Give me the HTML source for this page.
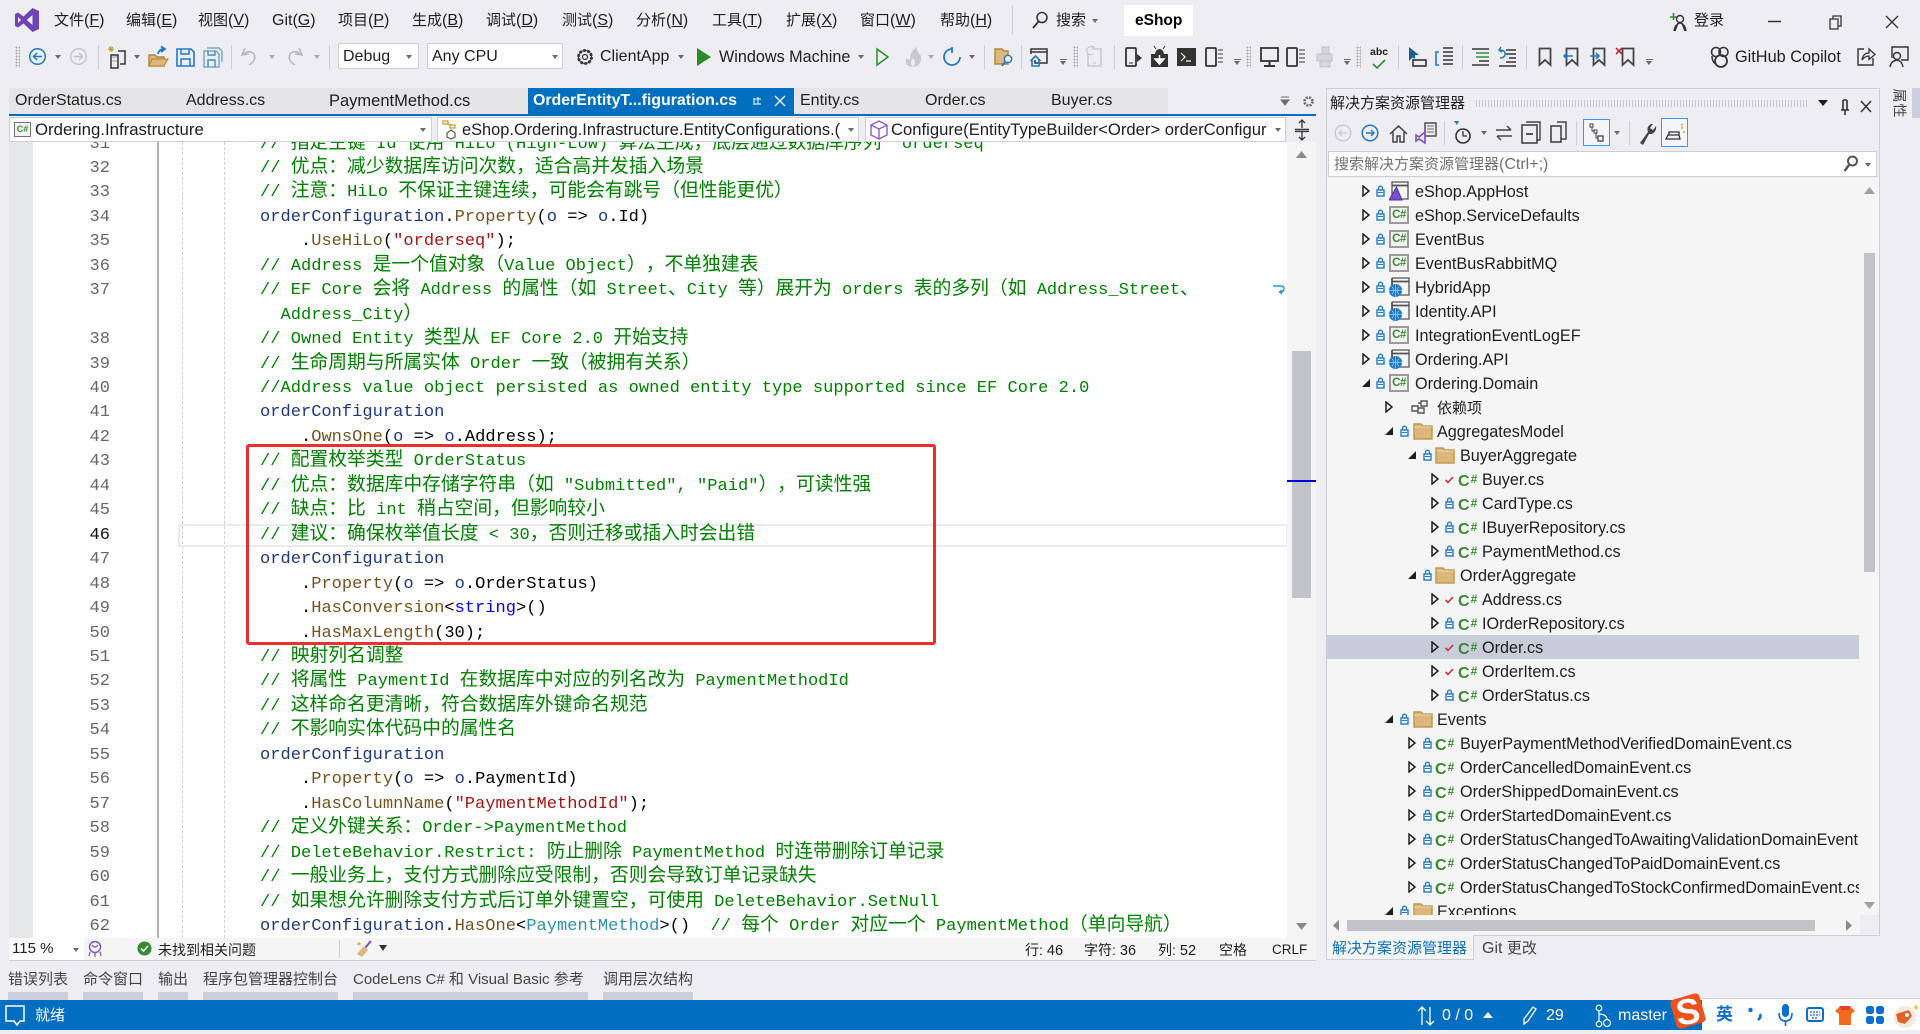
<!DOCTYPE html>
<html lang="zh"><head><meta charset="utf-8"><title>eShop</title>
<style>
html,body{margin:0;padding:0}
body{width:1920px;height:1030px;overflow:hidden;background:#eeeef2;position:relative;font:16px/20px "Liberation Sans","Noto Sans CJK SC",sans-serif;color:#1e1e1e}
.a{position:absolute}
.t{position:absolute;white-space:nowrap;line-height:20px}
em{font-style:normal;font-size:15px}
svg{overflow:visible}
svg.a{display:block}
.cr{position:absolute;width:0;height:0;border-left:3.5px solid transparent;border-right:3.5px solid transparent;border-top:4px solid #6a6a6a}
.sep{position:absolute;width:1px;background:#cccedb}
.gp{position:absolute;width:5px;height:22px;background-image:radial-gradient(circle,#a8a8ae 0.8px,transparent 1px);background-size:3px 3px}
.cb{position:absolute;background:#fff;border:1px solid #ccced8;box-sizing:border-box}
.code{position:absolute;left:0;top:142px;width:1287px;height:796px;overflow:hidden}
.ln{position:absolute;left:0;top:-9.5px;width:110px;text-align:right;color:#666}
.cd{position:absolute;left:260px;top:-9.5px;width:1030px;color:#000}
.ln p,.cd p{margin:0;height:24.46px;white-space:pre;font:17.07px/24.46px "Liberation Mono",monospace}
.cd b{font:400 18.8px/0 "Noto Sans CJK SC",sans-serif;text-spacing-trim:space-all}
.g{color:#008000}.n{color:#1f377f}.m{color:#74531f}.s{color:#a31515}.y{color:#2b91af}.k{color:#0000ff}
.tree{position:absolute;left:1326px;top:179px;width:533px;height:736px;overflow:hidden}
.r{position:absolute;left:0;width:533px;height:24px;line-height:24px;white-space:nowrap;font-size:16.2px}
.r svg,.r b,.r span{position:absolute}
.r span{top:1px}
.e{top:6px;width:9px;height:12px}
.lk{top:6px;width:9px;height:12px}
.ic{top:2px;width:24px;height:20px}
.l1 .e{left:36px}.l1 .lk{left:50px}.l1 .ic{left:63px}.l1 span{left:89px}
.l2 .e{left:59px}.l2 .lk{left:74px}.l2 .ic{left:87px}.l2 span{left:111px}
.l3 .e{left:82px}.l3 .lk{left:97px}.l3 .ic{left:109px}.l3 span{left:134px}
.l4 .e{left:105px}.l4 .lk{left:119px}.l4 .ic{left:132px}.l4 span{left:156px}
.r b.cs{top:0;font:700 16px/24px "Liberation Sans",sans-serif;color:#388a34;width:22px}
.r b.cs small{font-size:12px;vertical-align:3px;margin-left:1px}
.l3 b.cs{left:109px}.l4 b.cs{left:132px}
.r b.pj{left:63px;top:3px;width:20px;height:18px;box-sizing:border-box;border:2px solid #9a9a9a;background:#f4f4f4;color:#388a34;font:700 11.5px/14px "Liberation Sans",sans-serif;text-align:center;letter-spacing:-.5px}
.sel{background:#c9ccd9}
.wht{color:#fff}
.bar{position:absolute;width:7px;height:1px;background:#6a6a6a}
</style></head><body>
<svg width="0" height="0" style="position:absolute"><defs>
<symbol id="x" viewBox="0 0 9 12"><path d="M1 1L7 6L1 11Z" fill="none" stroke="#222" stroke-width="1.5"/></symbol>
<symbol id="v" viewBox="0 0 9 12"><path d="M8 2V10H0Z" fill="#1e1e1e"/></symbol>
<symbol id="l" viewBox="0 0 9 12"><path d="M2.5 5V3.2a2 2 0 0 1 4 0V5" fill="none" stroke="#1e78c8" stroke-width="1.3"/><rect x="1" y="5" width="7" height="6" fill="#fff" stroke="#1e78c8" stroke-width="1.4"/><path d="M2 7.5h5" stroke="#1e78c8"/></symbol>
<symbol id="ck" viewBox="0 0 9 12"><path d="M.5 7L3 9.5L8 4" fill="none" stroke="#d13438" stroke-width="1.6"/></symbol>
<symbol id="f" viewBox="0 0 24 20"><path d="M1 3H8L10 5H19V18H1Z" fill="#dcb67a" stroke="#c19a4e" stroke-width="1.5"/><path d="M1.5 6H18.5" stroke="#f0dcb4"/></symbol>
<symbol id="w" viewBox="0 0 24 20"><path d="M3 1H20V18H10" fill="#f4f4f4" stroke="#555" stroke-width="1.3"/><path d="M3 9V1M3 4.5H20" fill="none" stroke="#555" stroke-width="1.8"/><circle cx="6.5" cy="13.5" r="6.5" fill="#1e78c8"/><path d="M0 13.5h13M6.500 7v13M3 9.500q3.500 4 0 8M10 9.500q-3.500 4 0 8" stroke="#a9d0f0" stroke-width=".7" fill="none"/></symbol>
<symbol id="ah" viewBox="0 0 24 20"><path d="M3 1H19V18H3Z" fill="#f4f4f4" stroke="#555" stroke-width="1.3"/><path d="M3 4.500H19" stroke="#555" stroke-width="1.800"/><path d="M7.500 6L13 19H0Z" fill="#7a4fc9" stroke="#5a2fa9"/></symbol>
<symbol id="dp" viewBox="0 0 24 20"><path d="M2 9h6v5H2zM11 4h6v5h-6zM14 11h-6v5h6zM8 6h3" fill="#f4f4f4" stroke="#555" stroke-width="1.4"/></symbol>
<symbol id="bm" viewBox="0 0 14 20"><path d="M1.500 1.500H12.500V18L7 13L1.500 18Z" fill="none" stroke="#444" stroke-width="1.800"/></symbol>
</defs></svg>

<!-- title bar -->
<svg class="a" style="left:15px;top:8px" width="24" height="24" viewBox="0 0 24 24"><path fill-rule="evenodd" fill="#6f42b5" d="M17.500 0L24 3V21L17.500 24L8.500 15.500L3 19.500L0 18V6L3 4.500L8.500 8.500ZM17.500 7L11.700 12L17.500 17ZM3 9V15L6 12Z"/></svg>
<span class="t" style="left:54px;top:11px"><em>文件</em>(<u>F</u>)</span>
<span class="t" style="left:126px;top:11px"><em>编辑</em>(<u>E</u>)</span>
<span class="t" style="left:198px;top:11px"><em>视图</em>(<u>V</u>)</span>
<span class="t" style="left:272px;top:11px">Git(<u>G</u>)</span>
<span class="t" style="left:338px;top:11px"><em>项目</em>(<u>P</u>)</span>
<span class="t" style="left:412px;top:11px"><em>生成</em>(<u>B</u>)</span>
<span class="t" style="left:486px;top:11px"><em>调试</em>(<u>D</u>)</span>
<span class="t" style="left:562px;top:11px"><em>测试</em>(<u>S</u>)</span>
<span class="t" style="left:636px;top:11px"><em>分析</em>(<u>N</u>)</span>
<span class="t" style="left:712px;top:11px"><em>工具</em>(<u>T</u>)</span>
<span class="t" style="left:786px;top:11px"><em>扩展</em>(<u>X</u>)</span>
<span class="t" style="left:860px;top:11px"><em>窗口</em>(<u>W</u>)</span>
<span class="t" style="left:940px;top:11px"><em>帮助</em>(<u>H</u>)</span>
<div class="sep" style="left:1012px;top:6px;height:28px"></div>
<svg class="a" style="left:1031px;top:11px" width="18" height="20"><circle cx="11" cy="6.500" r="5" fill="none" stroke="#333" stroke-width="1.500"/><path d="M7.500 10.500L2 17" stroke="#333" stroke-width="1.800"/></svg>
<span class="t" style="left:1056px;top:11px"><em>搜索</em></span><i class="cr" style="left:1092px;top:19px"></i>
<div class="a" style="left:1124px;top:5px;width:69px;height:31px;background:#fff"></div>
<span class="t" style="left:1135px;top:11px;font-weight:700;font-size:15.500px;color:#000">eShop</span>
<svg class="a" style="left:1669px;top:10px" width="22" height="22"><path d="M1 7H8M4.500 3V10" stroke="#388a34" stroke-width="1.600"/><circle cx="11" cy="9" r="3.500" fill="none" stroke="#333" stroke-width="1.400"/><path d="M5 21Q6 14 11 13Q16 14 17 21M9 13L6 21M13 13L16 21" fill="none" stroke="#333" stroke-width="1.400"/></svg>
<span class="t" style="left:1694px;top:11px"><em>登录</em></span>
<svg class="a" style="left:1768px;top:14px" width="140" height="16"><path d="M0 7.500H13" stroke="#333" stroke-width="1.500"/><path d="M62 5H70V15H62ZM65 5V2H73V12H70" fill="none" stroke="#333" stroke-width="1.300"/><path d="M118 2L130 14M130 2L118 14" stroke="#333" stroke-width="1.300"/></svg>

<!-- toolbar -->
<div class="gp" style="left:15px;top:46px"></div>
<svg class="a" style="left:29px;top:47px" width="20" height="20"><circle cx="8.500" cy="9.500" r="7.800" fill="none" stroke="#1e78c8" stroke-width="1.500"/><path d="M13 9.500H5M8 6L4.500 9.500L8 13" fill="none" stroke="#1e78c8" stroke-width="1.500"/></svg>
<i class="cr" style="left:55px;top:55px"></i>
<svg class="a" style="left:70px;top:47px" width="20" height="20"><circle cx="8.500" cy="9.500" r="7.800" fill="none" stroke="#c2c2c6" stroke-width="1.300"/><path d="M4 9.500H12M9 6L12.500 9.500L9 13" fill="none" stroke="#c2c2c6" stroke-width="1.400"/></svg>
<div class="sep" style="left:98px;top:45px;height:24px"></div>
<svg class="a" style="left:107px;top:45px" width="22" height="24"><path d="M4 1V7M1 4H7M2 2L6 6M6 2L2 6" stroke="#c89a2a" stroke-width="1"/><path d="M4 10H11V23H4ZM11 6H18V19H13" fill="#eeeef2" stroke="#333" stroke-width="1.500"/><path d="M5 12H10M5 16H10" stroke="#999"/></svg>
<i class="cr" style="left:134px;top:55px"></i>
<svg class="a" style="left:148px;top:46px" width="22" height="22"><path d="M1 9H7L9 11H16V20H1Z" fill="#dcb67a" stroke="#b0853a" stroke-width="1.400"/><path d="M1 20L4 13H20L16 20Z" fill="#dcb67a" stroke="#b0853a"/><path d="M10 8Q11 3 16 3M13 .5L17 3L13 6" fill="none" stroke="#1e78c8" stroke-width="1.800"/></svg>
<svg class="a" style="left:176px;top:48px" width="20" height="20"><path d="M1 1H15L18 4V18H1Z" fill="#eeeef2" stroke="#1e78c8" stroke-width="1.600"/><path d="M5 1V6H13V1M5 18V11H14V18" fill="none" stroke="#1e78c8" stroke-width="1.500"/></svg>
<svg class="a" style="left:203px;top:47px" width="20" height="21"><path d="M4 1H16L19 4V15M1 4H13L16 7V20H1Z" fill="#eeeef2" stroke="#7aa7d0" stroke-width="1.500"/><path d="M5 4V8H12V4M5 20V13H12V20" fill="none" stroke="#4a89c4" stroke-width="1.400"/></svg>
<div class="sep" style="left:231px;top:45px;height:24px"></div>
<svg class="a" style="left:240px;top:47px" width="18" height="20"><path d="M5 1L2 8L9 7M2.500 8Q9 2 14 7Q17 13 9 18" fill="none" stroke="#b9b9bf" stroke-width="1.600"/></svg>
<i class="cr" style="left:269px;top:55px;border-top-color:#aaa"></i>
<svg class="a" style="left:286px;top:47px" width="18" height="20"><path d="M13 1L16 8L9 7M15.500 8Q9 2 4 7Q1 13 9 18" fill="none" stroke="#b9b9bf" stroke-width="1.600"/></svg>
<i class="cr" style="left:314px;top:55px;border-top-color:#aaa"></i>
<div class="sep" style="left:329px;top:45px;height:24px"></div>
<div class="cb" style="left:338px;top:43px;width:81px;height:26px"></div>
<span class="t" style="left:343px;top:47px">Debug</span><i class="cr" style="left:406px;top:55px"></i>
<div class="cb" style="left:427px;top:43px;width:136px;height:26px"></div>
<span class="t" style="left:432px;top:47px">Any CPU</span><i class="cr" style="left:552px;top:55px"></i>
<svg class="a" style="left:574px;top:46px" width="22" height="22"><circle cx="11" cy="11" r="6.500" fill="none" stroke="#333" stroke-width="2.800" stroke-dasharray="2.500 1.600"/><circle cx="11" cy="11" r="6.500" fill="none" stroke="#333" stroke-width="1"/><circle cx="11" cy="11" r="2.500" fill="none" stroke="#333" stroke-width="1.200"/></svg>
<span class="t" style="left:600px;top:47px">ClientApp</span><i class="cr" style="left:678px;top:55px"></i>
<svg class="a" style="left:697px;top:48px" width="14" height="18"><path d="M0 0L14 9L0 18Z" fill="#2b8a2b"/></svg>
<span class="t" style="left:719px;top:47px;font-size:16.200px">Windows Machine</span><i class="cr" style="left:858px;top:55px"></i>
<svg class="a" style="left:876px;top:48px" width="13" height="18"><path d="M1 1L12 9L1 17Z" fill="none" stroke="#2b8a2b" stroke-width="1.500"/></svg>
<svg class="a" style="left:903px;top:46px" width="20" height="22"><path d="M13 1Q15 7 18 10Q19 20 10 21Q1 20 3 12Q5 14 7 13Q7 6 13 1Z" fill="#c9c9cd"/><path d="M10 21Q6 17 10 12Q14 17 10 21Z" fill="#eeeef2"/></svg>
<i class="cr" style="left:928px;top:55px;border-top-color:#aaa"></i>
<svg class="a" style="left:943px;top:47px" width="20" height="20"><path d="M9 2A8 8 0 1 0 17 10M9 0V6" fill="none" stroke="#1e78c8" stroke-width="1.700"/></svg>
<i class="cr" style="left:969px;top:55px"></i>
<div class="sep" style="left:984px;top:45px;height:24px"></div>
<svg class="a" style="left:994px;top:47px" width="20" height="21"><path d="M1 2H8L10 4H14V17H1Z" fill="#dcb67a" stroke="#b0853a" stroke-width="1.400"/><circle cx="14" cy="12" r="3.700" fill="#eee" stroke="#1e78c8" stroke-width="1.400"/><path d="M11 15L8 19" stroke="#1e78c8" stroke-width="1.800"/></svg>
<div class="sep" style="left:1021px;top:45px;height:24px"></div>
<svg class="a" style="left:1030px;top:48px" width="20" height="20"><path d="M5 12V15H17V1H1V6M1 4H17" fill="none" stroke="#333" stroke-width="1.500"/><path d="M.5 13L5.500 8L10.500 13M2 12V18H9V12" fill="none" stroke="#1e78c8" stroke-width="1.600"/></svg>
<div class="bar" style="left:1060px;top:59px"></div><i class="cr" style="left:1060px;top:61px"></i>
<div class="gp" style="left:1073px;top:46px"></div>
<svg class="a" style="left:1085px;top:46px" width="18" height="22"><path d="M3 7V20H16V3H9" fill="none" stroke="#c9c9cd" stroke-width="1.500"/><path d="M7 1A4 4 0 1 0 8 8M6 0L9 1L7 4M8 17H11" fill="none" stroke="#c9c9cd" stroke-width="1.200"/></svg>
<div class="sep" style="left:1114px;top:45px;height:24px"></div>
<svg class="a" style="left:1125px;top:47px" width="18" height="21"><rect x="1" y="1" width="10" height="18" rx="1" fill="none" stroke="#333" stroke-width="1.800"/><path d="M12 7L17 11L12 15Z" fill="#333"/><path d="M4 16H8" stroke="#333"/></svg>
<svg class="a" style="left:1150px;top:46px" width="19" height="22"><path d="M1 21V8H5Q6 3 9.500 3Q13 3 14 8H18V21Z" fill="#333"/><path d="M6 3L4 0M13 3L15 0" stroke="#333"/><path d="M9.500 9V14M5 13H14L9.500 18Z" fill="#fff" stroke="#fff" stroke-width="1.500"/></svg>
<svg class="a" style="left:1177px;top:48px" width="19" height="18"><rect width="19" height="18" fill="#333"/><path d="M4 5L8 9L4 13M9 13H14" fill="none" stroke="#fff" stroke-width="1.200"/></svg>
<svg class="a" style="left:1205px;top:47px" width="19" height="21"><rect x="1" y="1" width="10" height="18" rx="1" fill="none" stroke="#333" stroke-width="1.800"/><path d="M13 3H18M13 7H18M13 11H18M13 15H18" stroke="#777" stroke-width="1.400"/></svg>
<div class="bar" style="left:1234px;top:59px"></div><i class="cr" style="left:1234px;top:61px"></i>
<div class="gp" style="left:1246px;top:46px"></div>
<svg class="a" style="left:1260px;top:47px" width="19" height="21"><rect x="1" y="1" width="17" height="13" fill="none" stroke="#333" stroke-width="1.800"/><path d="M9.500 14V18M4 19H15" stroke="#333" stroke-width="2"/></svg>
<svg class="a" style="left:1286px;top:47px" width="20" height="21"><rect x="1" y="1" width="10" height="18" rx="1" fill="none" stroke="#333" stroke-width="1.800"/><path d="M13 3H19M13 7H19M13 11H19M13 15H19" stroke="#777" stroke-width="1.400"/></svg>
<svg class="a" style="left:1315px;top:46px" width="20" height="22"><path d="M7 1H14V8H7ZM2 8H17V15H2ZM5 15H15V21H5Z" fill="#d6d6da" stroke="#c2c2c6"/></svg>
<div class="bar" style="left:1344px;top:59px"></div><i class="cr" style="left:1344px;top:61px"></i>
<div class="gp" style="left:1356px;top:46px"></div>
<span class="t" style="left:1370px;top:46px;font:700 10.500px/12px 'Liberation Sans',sans-serif">abc</span>
<svg class="a" style="left:1372px;top:59px" width="16" height="10"><path d="M1 5L5 9L13 1" fill="none" stroke="#388a34" stroke-width="1.600"/></svg>
<div class="sep" style="left:1398px;top:45px;height:24px"></div>
<svg class="a" style="left:1407px;top:46px" width="20" height="22"><path d="M2 1V15L5.500 11.500L8 13V9H12Z" fill="#1c5c9c"/><rect x="6" y="14" width="13" height="6" fill="none" stroke="#333" stroke-width="1.600"/></svg>
<svg class="a" style="left:1435px;top:47px" width="20" height="20"><path d="M4 5H1V18H4" fill="none" stroke="#1e78c8" stroke-width="1.600"/><path d="M8 1H18M8 5H18M8 9H18M8 13H18M8 17H18" stroke="#333" stroke-width="1.400"/></svg>
<div class="sep" style="left:1462px;top:45px;height:24px"></div>
<svg class="a" style="left:1471px;top:48px" width="20" height="18"><path d="M1 1H18M8 13H18M1 17H18" stroke="#333" stroke-width="1.500"/><path d="M5 5H18M5 9H18" stroke="#388a34" stroke-width="1.500"/></svg>
<svg class="a" style="left:1498px;top:47px" width="20" height="20"><path d="M8 3H18M8 7H18M11 11H18M8 15H18M1 19H18" stroke="#333" stroke-width="1.500"/><path d="M3 0L1 3L4 5M1 3Q8 3 7 8Q6 11 2 11" fill="none" stroke="#1e78c8" stroke-width="1.500"/></svg>
<div class="sep" style="left:1526px;top:45px;height:24px"></div>
<svg class="a" style="left:1538px;top:47px" width="14" height="20"><use href="#bm"/></svg>
<svg class="a" style="left:1565px;top:47px" width="14" height="20"><use href="#bm"/></svg><svg class="a" style="left:1562px;top:52px" width="12" height="8"><path d="M11 4H2M5 1L2 4L5 7" fill="none" stroke="#1e78c8" stroke-width="1.600"/></svg>
<svg class="a" style="left:1592px;top:47px" width="14" height="20"><use href="#bm"/></svg><svg class="a" style="left:1590px;top:52px" width="12" height="8"><path d="M0 4H9M6 1L9 4L6 7" fill="none" stroke="#1e78c8" stroke-width="1.600"/></svg>
<svg class="a" style="left:1621px;top:47px" width="14" height="20"><use href="#bm"/></svg><svg class="a" style="left:1615px;top:47px" width="9" height="9"><path d="M1 1L7 7M7 1L1 7" stroke="#c8102e" stroke-width="1.500"/></svg>
<div class="bar" style="left:1646px;top:59px"></div><i class="cr" style="left:1646px;top:61px"></i>
<svg class="a" style="left:1710px;top:46px" width="20" height="22"><circle cx="6" cy="6" r="4.500" fill="none" stroke="#333" stroke-width="1.600"/><circle cx="13.500" cy="6" r="4.500" fill="none" stroke="#333" stroke-width="1.600"/><circle cx="11" cy="15" r="6" fill="none" stroke="#333" stroke-width="1.800"/><path d="M2 10Q2 16 6 18" fill="none" stroke="#333" stroke-width="1.500"/></svg>
<span class="t" style="left:1735px;top:47px;font-size:16.300px">GitHub Copilot</span>
<svg class="a" style="left:1857px;top:47px" width="19" height="20"><path d="M7 2H1V18H16V11" fill="none" stroke="#333" stroke-width="1.400"/><path d="M5 13Q6 6 12 6V2L18 7.500L12 12.500V9Q8 9 5 13Z" fill="#eee" stroke="#333" stroke-width="1.300"/></svg>
<svg class="a" style="left:1888px;top:46px" width="21" height="22"><path d="M4 12V1H20V14H13" fill="none" stroke="#333" stroke-width="1.400"/><circle cx="9" cy="10" r="3.500" fill="#eee" stroke="#333" stroke-width="1.400"/><path d="M2 21Q3 15 9 14Q14 15 15 21" fill="none" stroke="#333" stroke-width="1.400"/></svg>

<!-- document tabs -->
<div class="a" style="left:9px;top:88px;width:1159px;height:26px;background:#e5e5e8"></div>
<div class="a" style="left:528px;top:88px;width:266px;height:26px;background:#006fc0"></div>
<div class="a" style="left:9px;top:114px;width:1307px;height:2px;background:#006fc0"></div>
<span class="t" style="left:15px;top:91px">OrderStatus.cs</span>
<span class="t" style="left:186px;top:91px">Address.cs</span>
<span class="t" style="left:329px;top:91px;font-size:16.500px">PaymentMethod.cs</span>
<span class="t wht" style="left:533px;top:91px;font-weight:700;font-size:15.900px">OrderEntityT...figuration.cs</span>
<svg class="a" style="left:751px;top:96px" width="11" height="11"><path d="M3 1V8M8 1V8M2 8H9M3 4H8M1 4H3" stroke="#fff" stroke-width="1" fill="none" transform="rotate(90 5.500 5.500)"/></svg>
<svg class="a" style="left:774px;top:95px" width="12" height="12"><path d="M1 1L11 11M11 1L1 11" stroke="#fff" stroke-width="1.300"/></svg>
<span class="t" style="left:800px;top:91px">Entity.cs</span>
<span class="t" style="left:925px;top:91px">Order.cs</span>
<span class="t" style="left:1051px;top:91px">Buyer.cs</span>
<svg class="a" style="left:1280px;top:96px" width="10" height="12"><path d="M1 1H9M1 4L5 9L9 4Z" fill="#6a6a6a" stroke="#6a6a6a"/></svg>
<svg class="a" style="left:1302px;top:95px" width="13" height="13"><circle cx="6.500" cy="6.500" r="4" fill="none" stroke="#6a6a6a" stroke-width="2.600" stroke-dasharray="2 1.200"/></svg>

<!-- nav bar -->
<div class="cb" style="left:9px;top:117px;width:423px;height:25px"></div>
<div class="cb" style="left:437px;top:117px;width:422px;height:25px"></div>
<div class="cb" style="left:865px;top:117px;width:421px;height:25px"></div>
<div class="a" style="left:14px;top:122px;width:17px;height:15px;border:1.500px solid #777;box-sizing:border-box;background:#f4f4f4;color:#388a34;font:700 9px/12px 'Liberation Sans',sans-serif;text-align:center">C#</div>
<span class="t" style="left:35px;top:120px;font-size:16.800px">Ordering.Infrastructure</span><i class="cr" style="left:420px;top:128px"></i>
<svg class="a" style="left:441px;top:120px" width="20" height="20"><path d="M2 1H7V4H2ZM9 5H14V8H9Z" fill="none" stroke="#c89a2a" stroke-width="1.200"/><path d="M5 4L11 5" stroke="#c89a2a"/><path d="M10 10L14 13V17L10 19L6 17V13Z" fill="#fff" stroke="#555" stroke-width="1.200"/></svg>
<span class="t" style="left:462px;top:120px;width:387px;overflow:hidden;font-size:16.400px">eShop.Ordering.Infrastructure.EntityConfigurations.(</span><i class="cr" style="left:848px;top:128px"></i>
<svg class="a" style="left:870px;top:120px" width="18" height="20"><path d="M9 1L17 5V15L9 19L1 15V5ZM1 5L9 9L17 5M9 9V19" fill="none" stroke="#8a5cc8" stroke-width="1.400"/></svg>
<span class="t" style="left:891px;top:120px;width:384px;overflow:hidden;font-size:16.650px">Configure(EntityTypeBuilder&lt;Order&gt; orderConfigur</span><i class="cr" style="left:1275px;top:128px"></i>
<svg class="a" style="left:1294px;top:120px" width="16" height="20"><path d="M1 9.500H15" stroke="#333" stroke-width="1.500"/><path d="M1 11.500H15M8 0V8M8 12V20M5 3L8 0L11 3M5 17L8 20L11 17" fill="none" stroke="#333" stroke-width="1.300"/></svg>

<!-- editor -->
<div class="a" style="left:9px;top:142px;width:1278px;height:796px;background:#fff"></div>
<div class="a" style="left:9px;top:142px;width:24px;height:796px;background:#e6e7e8"></div>
<div class="a" style="left:157px;top:142px;width:2px;height:796px;background:#b0b0b0"></div>
<div class="a" style="left:182px;top:142px;height:796px;border-left:1px dashed #cfcfcf"></div>
<div class="a" style="left:224px;top:142px;height:796px;border-left:1px dashed #cfcfcf"></div>
<div class="a" style="left:178px;top:524px;width:1106px;height:19px;border:2px solid #eaeaf2"></div>
<div class="code">
<div class="ln"><p>31</p><p>32</p><p>33</p><p>34</p><p>35</p><p>36</p><p>37</p><p> </p><p>38</p><p>39</p><p>40</p><p>41</p><p>42</p><p>43</p><p>44</p><p>45</p><p style="color:#111">46</p><p>47</p><p>48</p><p>49</p><p>50</p><p>51</p><p>52</p><p>53</p><p>54</p><p>55</p><p>56</p><p>57</p><p>58</p><p>59</p><p>60</p><p>61</p><p>62</p></div>
<div class="cd">
<p class="g">// <b>指定主键</b> Id <b>使用</b> HiLo (High-Low) <b>算法生成，底层通过数据库序列</b>  orderseq</p>
<p class="g">// <b>优点：减少数据库访问次数，适合高并发插入场景</b></p>
<p class="g">// <b>注意：</b>HiLo <b>不保证主键连续，可能会有跳号（但性能更优）</b></p>
<p><span class="n">orderConfiguration</span>.<span class="m">Property</span>(<span class="n">o</span> =&gt; <span class="n">o</span>.Id)</p>
<p>    .<span class="m">UseHiLo</span>(<span class="s">"orderseq"</span>);</p>
<p class="g">// Address <b>是一个值对象（</b>Value Object<b>），不单独建表</b></p>
<p class="g">// EF Core <b>会将</b> Address <b>的属性（如</b> Street<b>、</b>City <b>等）展开为</b> orders <b>表的多列（如</b> Address_Street<b>、</b></p>
<p class="g">  Address_City<b>）</b></p>
<p class="g">// Owned Entity <b>类型从</b> EF Core 2.0 <b>开始支持</b></p>
<p class="g">// <b>生命周期与所属实体</b> Order <b>一致（被拥有关系）</b></p>
<p class="g">//Address value object persisted as owned entity type supported since EF Core 2.0</p>
<p class="n">orderConfiguration</p>
<p>    .<span class="m">OwnsOne</span>(<span class="n">o</span> =&gt; <span class="n">o</span>.Address);</p>
<p class="g">// <b>配置枚举类型</b> OrderStatus</p>
<p class="g">// <b>优点：数据库中存储字符串（如</b> "Submitted", "Paid"<b>），可读性强</b></p>
<p class="g">// <b>缺点：比</b> int <b>稍占空间，但影响较小</b></p>
<p class="g">// <b>建议：确保枚举值长度</b> &lt; 30<b>，否则迁移或插入时会出错</b></p>
<p class="n">orderConfiguration</p>
<p>    .<span class="m">Property</span>(<span class="n">o</span> =&gt; <span class="n">o</span>.OrderStatus)</p>
<p>    .<span class="m">HasConversion</span>&lt;<span class="k">string</span>&gt;()</p>
<p>    .<span class="m">HasMaxLength</span>(30);</p>
<p class="g">// <b>映射列名调整</b></p>
<p class="g">// <b>将属性</b> PaymentId <b>在数据库中对应的列名改为</b> PaymentMethodId</p>
<p class="g">// <b>这样命名更清晰，符合数据库外键命名规范</b></p>
<p class="g">// <b>不影响实体代码中的属性名</b></p>
<p class="n">orderConfiguration</p>
<p>    .<span class="m">Property</span>(<span class="n">o</span> =&gt; <span class="n">o</span>.PaymentId)</p>
<p>    .<span class="m">HasColumnName</span>(<span class="s">"PaymentMethodId"</span>);</p>
<p class="g">// <b>定义外键关系：</b>Order-&gt;PaymentMethod</p>
<p class="g">// DeleteBehavior.Restrict: <b>防止删除</b> PaymentMethod <b>时连带删除订单记录</b></p>
<p class="g">// <b>一般业务上，支付方式删除应受限制，否则会导致订单记录缺失</b></p>
<p class="g">// <b>如果想允许删除支付方式后订单外键置空，可使用</b> DeleteBehavior.SetNull</p>
<p><span class="n">orderConfiguration</span>.<span class="m">HasOne</span>&lt;<span class="y">PaymentMethod</span>&gt;()  <span class="g">// <b>每个</b> Order <b>对应一个</b> PaymentMethod<b>（单向导航）</b></span></p>
</div></div>
<svg class="a" style="left:1272px;top:284px" width="13" height="10"><path d="M1 2H9Q12 2 12 5Q12 8 8 8M10 6L7.500 8L10 10" fill="none" stroke="#1e9ad6" stroke-width="1.400"/></svg>
<div class="a" style="left:246px;top:444px;width:690px;height:201px;border:3px solid #e9302e;border-radius:3px;box-sizing:border-box"></div>
<!-- editor scrollbar -->
<div class="a" style="left:1287px;top:142px;width:29px;height:796px;background:#f5f5f5"></div>
<div class="a" style="left:1292px;top:351px;width:19px;height:247px;background:#c2c3c9"></div>
<svg class="a" style="left:1296px;top:151px" width="11" height="7"><path d="M5.500 0L11 7H0Z" fill="#8a8a8f"/></svg>
<svg class="a" style="left:1296px;top:923px" width="11" height="7"><path d="M0 0H11L5.500 7Z" fill="#8a8a8f"/></svg>
<div class="a" style="left:1287px;top:480px;width:29px;height:2px;background:#0000e0"></div>

<!-- editor status -->
<div class="a" style="left:9px;top:938px;width:1307px;height:22px;background:#f5f5f5;border-bottom:1px solid #ccced8;box-sizing:content-box"></div>
<div class="a" style="left:9px;top:938px;width:75px;height:22px;background:#fff"></div>
<span class="t" style="left:12px;top:939px;font-size:15px">115 %</span><i class="cr" style="left:73px;top:948px"></i>
<svg class="a" style="left:88px;top:940px" width="15" height="18"><circle cx="7" cy="7" r="5.500" fill="none" stroke="#7a4fc9" stroke-width="1.400"/><path d="M4 5Q7 9 10 5M7 12V17M2 12L1 16M12 12L13 16" fill="none" stroke="#7a4fc9" stroke-width="1.200"/></svg>
<svg class="a" style="left:137px;top:941px" width="15" height="15"><circle cx="7.500" cy="7.500" r="7" fill="#388a34"/><path d="M4 7.500L6.500 10L11 5" fill="none" stroke="#fff" stroke-width="1.500"/></svg>
<span class="t" style="left:158px;top:940px"><em style="font-size:14px">未找到相关问题</em></span>
<div class="sep" style="left:339px;top:940px;height:18px"></div>
<svg class="a" style="left:356px;top:940px" width="17" height="18"><path d="M15 1L9 8" stroke="#7a4fc9" stroke-width="2"/><path d="M8 6L12 10L6 17L1 14Z" fill="#dcb67a"/><path d="M3 2V5M1 4H5" stroke="#d4a017"/></svg>
<svg class="a" style="left:379px;top:945px" width="8" height="6"><path d="M0 0H8L4 6Z" fill="#333"/></svg>
<span class="t" style="left:1025px;top:940px;font-size:14.500px"><em style="font-size:14px">行:</em> 46</span>
<span class="t" style="left:1084px;top:940px;font-size:14.500px"><em style="font-size:14px">字符:</em> 36</span>
<span class="t" style="left:1158px;top:940px;font-size:14.500px"><em style="font-size:14px">列:</em> 52</span>
<span class="t" style="left:1219px;top:940px"><em style="font-size:14px">空格</em></span>
<span class="t" style="left:1272px;top:940px;font-size:13.500px">CRLF</span>

<!-- solution explorer -->
<div class="a" style="left:1326px;top:88px;width:554px;height:848px;box-sizing:border-box;border:1px solid #ccced8;background:#f5f5f5"></div>
<div class="a" style="left:1327px;top:89px;width:552px;height:89px;background:#eeeef2"></div>
<span class="t" style="left:1330px;top:94px"><em>解决方案资源管理器</em></span>
<div class="a" style="left:1476px;top:100px;width:332px;height:7px;background:repeating-linear-gradient(90deg,#c8c8d0 0 1px,transparent 1px 3px)"></div>
<svg class="a" style="left:1818px;top:100px" width="60" height="16"><path d="M0 0H10L5 6Z" fill="#1e1e1e"/><path d="M25 0V10M29 0V10M23 10H31M27 10V15M25 0H29" stroke="#333" stroke-width="1.600" fill="none"/><path d="M43 1L53 12M53 1L43 12" stroke="#333" stroke-width="1.500"/></svg>
<svg class="a" style="left:1334px;top:124px" width="18" height="18"><circle cx="9" cy="9" r="7.800" fill="none" stroke="#c9c9cd" stroke-width="1.400"/><path d="M13 9H5M8 6L5 9L8 12" fill="none" stroke="#c9c9cd" stroke-width="1.300"/></svg>
<svg class="a" style="left:1361px;top:124px" width="18" height="18"><circle cx="9" cy="9" r="7.800" fill="none" stroke="#1e78c8" stroke-width="1.500"/><path d="M5 9H13M10 6L13 9L10 12" fill="none" stroke="#1e78c8" stroke-width="1.400"/></svg>
<svg class="a" style="left:1389px;top:124px" width="19" height="19"><path d="M1 10L9.500 2L18 10M4 8V18H8V12H11V18H15V8" fill="none" stroke="#444" stroke-width="1.500"/></svg>
<svg class="a" style="left:1415px;top:122px" width="22" height="22"><rect x="10" y="1" width="11" height="13" fill="none" stroke="#444" stroke-width="1.400"/><path d="M12 4H19M12 7H19M12 10H19" stroke="#666"/><path d="M1 13L4 15L10 10V21L4 17L1 19Z" fill="none" stroke="#7a4fc9" stroke-width="1.600"/></svg>
<div class="sep" style="left:1444px;top:121px;height:24px"></div>
<svg class="a" style="left:1451px;top:120px" width="24" height="26"><path d="M3 1H8L6 5Z" fill="#1e78c8"/><circle cx="12" cy="16" r="7" fill="none" stroke="#333" stroke-width="1.600"/><path d="M12 11V16H16" fill="none" stroke="#333" stroke-width="1.300"/></svg>
<i class="cr" style="left:1481px;top:131px"></i>
<svg class="a" style="left:1495px;top:125px" width="18" height="17"><path d="M1 5H16M16 5L12 1M17 11H2M2 11L6 15" fill="none" stroke="#444" stroke-width="1.500"/></svg>
<svg class="a" style="left:1521px;top:121px" width="20" height="24"><path d="M5 1H19V19H16" fill="none" stroke="#444" stroke-width="1.400"/><rect x="1" y="4" width="15" height="18" fill="#eeeef2" stroke="#444" stroke-width="1.600"/><path d="M5 13H12" stroke="#333" stroke-width="1.600"/></svg>
<svg class="a" style="left:1549px;top:121px" width="19" height="24"><path d="M8 1H17V18H12" fill="none" stroke="#444" stroke-width="1.500"/><rect x="2" y="5" width="10" height="16" fill="#eeeef2" stroke="#444" stroke-width="1.600"/></svg>
<div class="sep" style="left:1576px;top:121px;height:24px"></div>
<div class="a" style="left:1583px;top:119px;width:27px;height:27px;box-sizing:border-box;border:1px solid #3399ff;background:#f5f5f8"></div>
<svg class="a" style="left:1589px;top:123px" width="16" height="20"><rect x="1" y="1" width="3" height="3" fill="none" stroke="#444"/><rect x="5" y="7" width="3" height="3" fill="none" stroke="#444"/><rect x="9" y="13" width="5" height="5" fill="none" stroke="#444" stroke-width="1.300"/><path d="M3 4V8H5M7 10V15H9" fill="none" stroke="#444"/></svg>
<i class="cr" style="left:1614px;top:131px"></i>
<div class="sep" style="left:1629px;top:121px;height:24px"></div>
<svg class="a" style="left:1638px;top:122px" width="20" height="23"><path d="M2 21L10 10Q8 5 13 2L15 2L12 6L15 8L18 4Q19 9 14 12Q12 12 11 12L5 23Z" fill="#444"/></svg>
<div class="a" style="left:1661px;top:118px;width:27px;height:29px;box-sizing:border-box;border:1px solid #3399ff;background:#f5f5f8"></div>
<svg class="a" style="left:1665px;top:124px" width="20" height="18"><path d="M1 15H15M3 11H14L15 15H1ZM4 11V8H14V11" fill="none" stroke="#333" stroke-width="1.300"/><path d="M17 2V5M18 8H20M16 1L18 0" stroke="#d4a017" stroke-width="1.200"/></svg>
<!-- search -->
<div class="cb" style="left:1328px;top:151px;width:549px;height:26px"></div>
<span class="t" style="left:1334px;top:155px;color:#717171"><em>搜索解决方案资源管理器</em>(Ctrl+;)</span>
<svg class="a" style="left:1843px;top:155px" width="16" height="17"><circle cx="9.500" cy="6" r="4.500" fill="none" stroke="#555" stroke-width="2"/><path d="M6 10L1.500 16" stroke="#555" stroke-width="2.400"/></svg>
<i class="cr" style="left:1865px;top:163px"></i>

<!-- tree -->
<div class="tree">
<div class="r l1" style="top:0"><svg class="e"><use href="#x"/></svg><svg class="lk"><use href="#l"/></svg><svg class="ic"><use href="#ah"/></svg><span>eShop.AppHost</span></div>
<div class="r l1" style="top:24px"><svg class="e"><use href="#x"/></svg><svg class="lk"><use href="#l"/></svg><b class="pj">C#</b><span>eShop.ServiceDefaults</span></div>
<div class="r l1" style="top:48px"><svg class="e"><use href="#x"/></svg><svg class="lk"><use href="#l"/></svg><b class="pj">C#</b><span>EventBus</span></div>
<div class="r l1" style="top:72px"><svg class="e"><use href="#x"/></svg><svg class="lk"><use href="#l"/></svg><b class="pj">C#</b><span>EventBusRabbitMQ</span></div>
<div class="r l1" style="top:96px"><svg class="e"><use href="#x"/></svg><svg class="lk"><use href="#l"/></svg><svg class="ic"><use href="#w"/></svg><span>HybridApp</span></div>
<div class="r l1" style="top:120px"><svg class="e"><use href="#x"/></svg><svg class="lk"><use href="#l"/></svg><svg class="ic"><use href="#w"/></svg><span>Identity.API</span></div>
<div class="r l1" style="top:144px"><svg class="e"><use href="#x"/></svg><svg class="lk"><use href="#l"/></svg><b class="pj">C#</b><span>IntegrationEventLogEF</span></div>
<div class="r l1" style="top:168px"><svg class="e"><use href="#x"/></svg><svg class="lk"><use href="#l"/></svg><svg class="ic"><use href="#w"/></svg><span>Ordering.API</span></div>
<div class="r l1" style="top:192px"><svg class="e"><use href="#v"/></svg><svg class="lk"><use href="#l"/></svg><b class="pj">C#</b><span>Ordering.Domain</span></div>
<div class="r l2" style="top:216px"><svg class="e"><use href="#x"/></svg><svg class="ic" style="left:84px"><use href="#dp"/></svg><span><em>依赖项</em></span></div>
<div class="r l2" style="top:240px"><svg class="e"><use href="#v"/></svg><svg class="lk"><use href="#l"/></svg><svg class="ic"><use href="#f"/></svg><span>AggregatesModel</span></div>
<div class="r l3" style="top:264px"><svg class="e"><use href="#v"/></svg><svg class="lk"><use href="#l"/></svg><svg class="ic"><use href="#f"/></svg><span>BuyerAggregate</span></div>
<div class="r l4" style="top:288px"><svg class="e"><use href="#x"/></svg><svg class="lk"><use href="#ck"/></svg><b class="cs">C<small>#</small></b><span>Buyer.cs</span></div>
<div class="r l4" style="top:312px"><svg class="e"><use href="#x"/></svg><svg class="lk"><use href="#l"/></svg><b class="cs">C<small>#</small></b><span>CardType.cs</span></div>
<div class="r l4" style="top:336px"><svg class="e"><use href="#x"/></svg><svg class="lk"><use href="#l"/></svg><b class="cs">C<small>#</small></b><span>IBuyerRepository.cs</span></div>
<div class="r l4" style="top:360px"><svg class="e"><use href="#x"/></svg><svg class="lk"><use href="#l"/></svg><b class="cs">C<small>#</small></b><span>PaymentMethod.cs</span></div>
<div class="r l3" style="top:384px"><svg class="e"><use href="#v"/></svg><svg class="lk"><use href="#l"/></svg><svg class="ic"><use href="#f"/></svg><span>OrderAggregate</span></div>
<div class="r l4" style="top:408px"><svg class="e"><use href="#x"/></svg><svg class="lk"><use href="#ck"/></svg><b class="cs">C<small>#</small></b><span>Address.cs</span></div>
<div class="r l4" style="top:432px"><svg class="e"><use href="#x"/></svg><svg class="lk"><use href="#l"/></svg><b class="cs">C<small>#</small></b><span>IOrderRepository.cs</span></div>
<div class="r l4 sel" style="top:456px"><svg class="e"><use href="#x"/></svg><svg class="lk"><use href="#ck"/></svg><b class="cs">C<small>#</small></b><span>Order.cs</span></div>
<div class="r l4" style="top:480px"><svg class="e"><use href="#x"/></svg><svg class="lk"><use href="#ck"/></svg><b class="cs">C<small>#</small></b><span>OrderItem.cs</span></div>
<div class="r l4" style="top:504px"><svg class="e"><use href="#x"/></svg><svg class="lk"><use href="#l"/></svg><b class="cs">C<small>#</small></b><span>OrderStatus.cs</span></div>
<div class="r l2" style="top:528px"><svg class="e"><use href="#v"/></svg><svg class="lk"><use href="#l"/></svg><svg class="ic"><use href="#f"/></svg><span>Events</span></div>
<div class="r l3" style="top:552px"><svg class="e"><use href="#x"/></svg><svg class="lk"><use href="#l"/></svg><b class="cs">C<small>#</small></b><span>BuyerPaymentMethodVerifiedDomainEvent.cs</span></div>
<div class="r l3" style="top:576px"><svg class="e"><use href="#x"/></svg><svg class="lk"><use href="#l"/></svg><b class="cs">C<small>#</small></b><span>OrderCancelledDomainEvent.cs</span></div>
<div class="r l3" style="top:600px"><svg class="e"><use href="#x"/></svg><svg class="lk"><use href="#l"/></svg><b class="cs">C<small>#</small></b><span>OrderShippedDomainEvent.cs</span></div>
<div class="r l3" style="top:624px"><svg class="e"><use href="#x"/></svg><svg class="lk"><use href="#l"/></svg><b class="cs">C<small>#</small></b><span>OrderStartedDomainEvent.cs</span></div>
<div class="r l3" style="top:648px"><svg class="e"><use href="#x"/></svg><svg class="lk"><use href="#l"/></svg><b class="cs">C<small>#</small></b><span>OrderStatusChangedToAwaitingValidationDomainEvent.cs</span></div>
<div class="r l3" style="top:672px"><svg class="e"><use href="#x"/></svg><svg class="lk"><use href="#l"/></svg><b class="cs">C<small>#</small></b><span>OrderStatusChangedToPaidDomainEvent.cs</span></div>
<div class="r l3" style="top:696px"><svg class="e"><use href="#x"/></svg><svg class="lk"><use href="#l"/></svg><b class="cs">C<small>#</small></b><span>OrderStatusChangedToStockConfirmedDomainEvent.cs</span></div>
<div class="r l2" style="top:720px"><svg class="e"><use href="#v"/></svg><svg class="lk"><use href="#l"/></svg><svg class="ic"><use href="#f"/></svg><span>Exceptions</span></div>
</div>
<!-- tree scrollbars -->
<svg class="a" style="left:1864px;top:187px" width="11" height="7"><path d="M5.500 0L11 7H0Z" fill="#a0a0a6"/></svg>
<div class="a" style="left:1864px;top:253px;width:11px;height:319px;background:#c2c3c9"></div>
<svg class="a" style="left:1864px;top:902px" width="11" height="7"><path d="M0 0H11L5.500 7Z" fill="#a0a0a6"/></svg>
<div class="a" style="left:1347px;top:920px;width:468px;height:11px;background:#c2c3c9"></div>
<svg class="a" style="left:1333px;top:920px" width="6" height="11"><path d="M6 0V11L0 5.500Z" fill="#8a8a8f"/></svg>
<svg class="a" style="left:1846px;top:920px" width="6" height="11"><path d="M0 0V11L6 5.500Z" fill="#8a8a8f"/></svg>
<div class="a" style="left:1860px;top:915px;width:19px;height:20px;background:#eeeef2"></div>
<!-- panel tabs -->
<div class="a" style="left:1326px;top:935px;width:148px;height:25px;box-sizing:border-box;background:#f5f5f5;border:1px solid #ccced8;border-top:0"></div>
<span class="t" style="left:1332px;top:939px;color:#0e70c0"><em>解决方案资源管理器</em></span>
<span class="t" style="left:1482px;top:939px;color:#444">Git <em>更改</em></span>
<!-- side tab -->
<div class="a" style="left:1912px;top:88px;width:8px;height:30px;background:#cccedb"></div>
<span class="t" style="left:1891px;top:88px;width:16px;font-size:14px;line-height:15px;color:#444;white-space:normal;text-align:center"><span style="display:block;transform:rotate(90deg)">属</span><span style="display:block;transform:rotate(90deg)">性</span></span>

<!-- bottom tabs -->
<span class="t" style="left:8px;top:970px;color:#444"><em>错误列表</em></span>
<span class="t" style="left:83px;top:970px;color:#444"><em>命令窗口</em></span>
<span class="t" style="left:158px;top:970px;color:#444"><em>输出</em></span>
<span class="t" style="left:203px;top:970px;color:#444"><em>程序包管理器控制台</em></span>
<span class="t" style="left:353px;top:970px;color:#444;font-size:15px">CodeLens C# <em>和</em> Visual Basic <em>参考</em></span>
<span class="t" style="left:603px;top:970px;color:#444"><em>调用层次结构</em></span>
<div class="a" style="left:8px;top:992px;width:60px;height:8px;background:#cccedb"></div>
<div class="a" style="left:83px;top:992px;width:60px;height:8px;background:#cccedb"></div>
<div class="a" style="left:158px;top:992px;width:30px;height:8px;background:#cccedb"></div>
<div class="a" style="left:203px;top:992px;width:135px;height:8px;background:#cccedb"></div>
<div class="a" style="left:353px;top:992px;width:235px;height:8px;background:#cccedb"></div>
<div class="a" style="left:603px;top:992px;width:90px;height:8px;background:#cccedb"></div>

<!-- status bar -->
<div class="a" style="left:0;top:1000px;width:1920px;height:30px;background:#016ec1"></div>
<svg class="a" style="left:4px;top:1005px" width="22" height="22"><path d="M2 1H20V16H16L13 20L10 16H2Z" fill="none" stroke="#fff" stroke-width="1.500"/></svg>
<span class="t wht" style="left:35px;top:1006px"><em>就绪</em></span>
<svg class="a" style="left:1417px;top:1006px" width="18" height="20"><path d="M5 19V1M1 5L5 1L9 5M13 1V19M9 15L13 19L17 15" fill="none" stroke="#fff" stroke-width="1.300"/></svg>
<span class="t wht" style="left:1442px;top:1006px">0 / 0</span>
<svg class="a" style="left:1483px;top:1012px" width="10" height="6"><path d="M5 0L10 6H0Z" fill="#fff"/></svg>
<svg class="a" style="left:1522px;top:1006px" width="15" height="19"><path d="M11 1L14 3L6 15L2 18L2 13Z" fill="none" stroke="#fff" stroke-width="1.300"/></svg>
<span class="t wht" style="left:1546px;top:1006px">29</span>
<svg class="a" style="left:1594px;top:1004px" width="18" height="24"><circle cx="5" cy="4" r="2.800" fill="none" stroke="#fff" stroke-width="1.200"/><circle cx="5" cy="20" r="2.800" fill="none" stroke="#fff" stroke-width="1.200"/><circle cx="13" cy="19" r="3.500" fill="none" stroke="#fff" stroke-width="1.200"/><path d="M5 7V17M5 10Q12 10 13 15" fill="none" stroke="#fff" stroke-width="1.200"/></svg>
<span class="t wht" style="left:1618px;top:1006px">master</span>
<div class="a" style="left:1702px;top:998px;width:218px;height:32px;background:#fff;border-top:1px solid #cfd3d8;box-sizing:border-box"></div>
<div class="a" style="left:1673px;top:996px;width:30px;height:30px;background:#f0501c;transform:rotate(-16deg);border-radius:4px"></div>
<span class="t wht" style="left:1672px;top:994px;width:32px;text-align:center;font:700 36px/36px 'Liberation Sans',sans-serif;transform:rotate(-8deg)">S</span>
<span class="t" style="left:1716px;top:1005px;color:#0a6fd0;font-weight:700"><em style="font-size:17px">英</em></span>
<svg class="a" style="left:1748px;top:1006px" width="15" height="16"><circle cx="2.500" cy="4" r="2.200" fill="#0a6fd0"/><path d="M12 8Q13.500 11 10 14" fill="none" stroke="#0a6fd0" stroke-width="2.600"/></svg>
<svg class="a" style="left:1778px;top:1003px" width="15" height="24"><rect x="4" y="1" width="7" height="13" rx="3.500" fill="#0a6fd0"/><path d="M1 10Q1 18 7.500 18Q14 18 14 10M7.500 18V23" fill="none" stroke="#0a6fd0" stroke-width="1.600"/></svg>
<svg class="a" style="left:1806px;top:1007px" width="18" height="15"><rect x="1" y="1" width="16" height="13" rx="2" fill="none" stroke="#0a6fd0" stroke-width="2"/><path d="M4 5H14M4 8H14M6 11H12" stroke="#0a6fd0" stroke-width="1.300" stroke-dasharray="2 1"/></svg>
<svg class="a" style="left:1834px;top:1005px" width="22" height="20"><path d="M6 1H16L21 6L17 9V20H5V9L1 6Z" fill="#f26a1b"/><path d="M6 1H16L15 5H7Z" fill="#e03a3a"/></svg>
<svg class="a" style="left:1866px;top:1006px" width="18" height="18"><rect x="0" y="0" width="8" height="8" rx="2.500" fill="#0a6fd0"/><rect x="10" y="0" width="8" height="8" rx="2.500" fill="#0a6fd0"/><rect x="0" y="10" width="8" height="8" rx="2.500" fill="#0a6fd0"/><rect x="10" y="10" width="8" height="8" rx="2.500" fill="#0a6fd0"/></svg>
<svg class="a" style="left:1893px;top:1002px" width="26" height="27"><circle cx="12" cy="15" r="11" fill="#f6e9de"/><path d="M3 12L16 8L19 14L12 22L5 20Z" fill="#e0642a"/><circle cx="14" cy="13" r="2" fill="#fff"/><path d="M23 3V8M21 5.500H25" stroke="#f2c230" stroke-width="1.500"/></svg>
</body></html>
